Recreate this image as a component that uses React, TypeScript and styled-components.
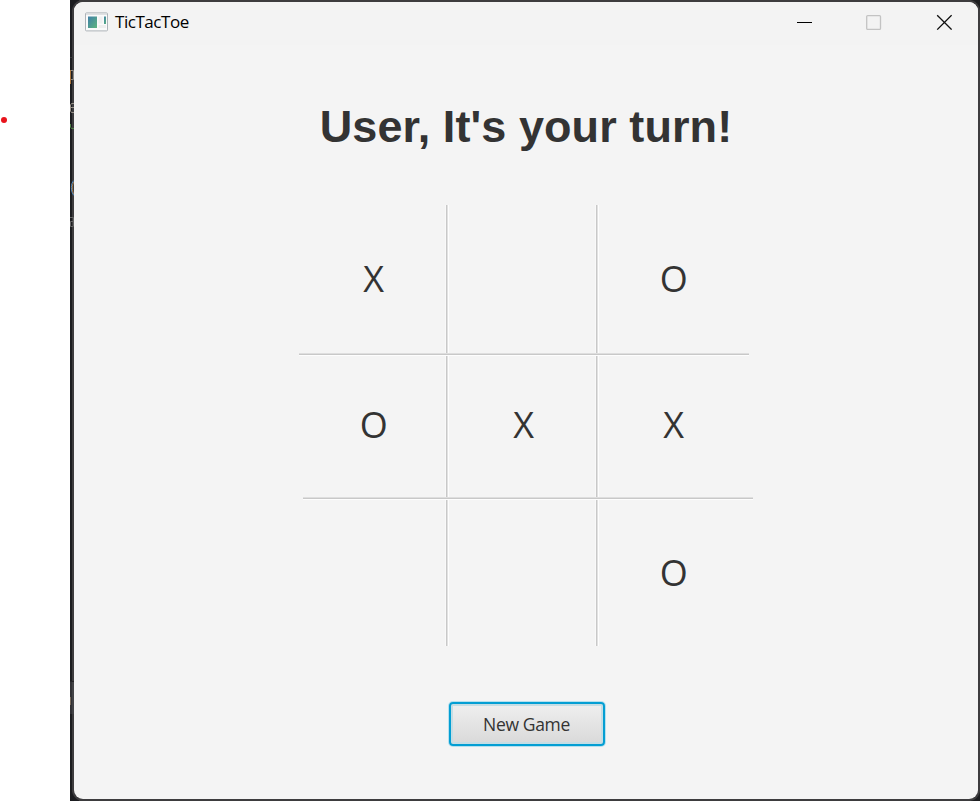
import React from 'react';
import styled, { createGlobalStyle } from 'styled-components';

const Global = createGlobalStyle`
  * { box-sizing: border-box; }
  body { margin: 0; background: #fff; overflow: hidden; }
`;

const Desktop = styled.div`
  display: flex;
  width: 980px;
  height: 801px;
  overflow: hidden;
  font-family: "Open Sans", "Noto Sans", sans-serif;
`;

const Margin = styled.div`
  flex: 0 0 70px;
  padding-top: 117px;
  background: #fff;
`;

const RedDot = styled.div`
  width: 6px;
  height: 6px;
  margin-left: 0.6px;
  border-radius: 50%;
  background: #e8141c;
`;

const Backdrop = styled.div`
  position: relative;
  flex: 1;
  padding: 2px 2px 2px 4px;
  background: linear-gradient(90deg, #1c1d20 2px, #3d3c3e 2px);
  overflow: hidden;
`;

const Corner = styled.div<{ $right?: boolean; $bottom?: boolean }>`
  position: absolute;
  ${(p) => (p.$right ? 'right: 0;' : 'left: 0;')}
  ${(p) => (p.$bottom ? 'bottom: 0;' : 'top: 0;')}
  width: 9px;
  height: 9px;
  background: #1c1d20;
`;

const EditorEdge = styled.svg`
  position: absolute;
  left: 0;
  top: 0;
`;

const Window = styled.main`
  position: relative;
  display: flex;
  flex-direction: column;
  align-items: center;
  width: 904px;
  height: 797px;
  border-radius: 9px;
  background: #f4f4f4;
  box-shadow: 0 0 0 2px #3d3c3e;
  overflow: hidden;
`;

const TitleBar = styled.header`
  display: flex;
  align-items: center;
  align-self: stretch;
  flex: 0 0 43px;
  padding: 0 11px 3px;
  background: #f3f3f3;
`;

const AppName = styled.span`
  flex: 1;
  margin-left: 6px;
  color: #000;
  font-size: 17px;
  line-height: 24px;
  letter-spacing: -0.45px;
`;

const Controls = styled.div`
  display: flex;
  gap: 46px;
  padding-right: 11px;
`;

const ControlButton = styled.button`
  display: flex;
  align-items: center;
  justify-content: center;
  width: 24px;
  height: 24px;
  padding: 0;
  border: 0;
  background: none;
`;

const Heading = styled.h1`
  margin: 56px 0 0;
  color: #333;
  font: bold 45px/52px "Liberation Sans", sans-serif;
  letter-spacing: 0.08px;
  white-space: nowrap;
`;

const Board = styled.div`
  display: grid;
  grid-template-columns: 146px 4px 146px 4px 150px;
  grid-template-rows: 148px 3px 141px 3px 146px;
  width: 450px;
  margin: 52px 4px 0 0;
`;

const Cell = styled.div<{ $col: number; $row: number; $drop: number }>`
  grid-column: ${(p) => p.$col * 2 + 1};
  grid-row: ${(p) => p.$row * 2 + 1};
  justify-self: start;
  width: 149.5px;
  padding-top: ${(p) => p.$drop}px;
  color: #333;
  font-size: 36px;
  line-height: 50px;
  text-align: center;
`;

const VLine = styled.div<{ $col: number }>`
  grid-column: ${(p) => p.$col};
  grid-row: 1 / -1;
  background: linear-gradient(90deg, #f9f9f9 1px, #c8c8c8 1px 2px, #e1e1e1 2px 3px, #fdfdfd 3px);
`;

const HLine = styled.div<{ $row: number; $shift?: number }>`
  grid-column: 1 / -1;
  grid-row: ${(p) => p.$row};
  margin-left: ${(p) => p.$shift ?? 0}px;
  margin-right: ${(p) => -(p.$shift ?? 0)}px;
  background: linear-gradient(#dedede 1px, #c8c8c8 1px 2px, #fdfdfd 2px);
`;

const NewGame = styled.button`
  width: 156px;
  height: 44px;
  margin: 56px 0 0 1px;
  padding: 0;
  border: 2px solid #039ed3;
  border-radius: 4px;
  background: linear-gradient(#efefef, #d9d9d9);
  box-shadow: 0 0 0 1px #b5e0ee, inset 0 0 0 2px #c5dde4;
  color: #333;
  font: 17.5px/24px "Open Sans", sans-serif;
  letter-spacing: -0.35px;
`;

const marks = [
  ['X', '', 'O'],
  ['O', 'X', 'X'],
  ['', '', 'O'],
];
const drops = [49, 44, 48];

function AppIcon() {
  return (
    <svg width="24" height="20" viewBox="0 0 24 20">
      <defs>
        <linearGradient id="pane" x1="0" y1="0" x2="1" y2="1">
          <stop offset="0" stopColor="#3f7fa8" />
          <stop offset="1" stopColor="#5db57e" />
        </linearGradient>
      </defs>
      <rect x="0.5" y="0.9" width="22" height="18" rx="1" fill="#fafafa" stroke="#adb3b8" />
      <path d="M1 2.2H22" stroke="#d2d5d8" />
      <rect x="3" y="4.5" width="9" height="11.5" fill="url(#pane)" />
      <rect x="13.5" y="4.5" width="4" height="7" fill="#f0f0f0" />
      <rect x="13.5" y="13" width="7.5" height="3" fill="#eee" />
      <rect x="19" y="4.5" width="2" height="7.5" fill="url(#pane)" />
    </svg>
  );
}

function EditorMarks() {
  return (
    <EditorEdge width="4" height="801" viewBox="0 0 4 801" fill="none">
      <path d="M0 57.5H4" stroke="#38383a" />
      <path d="M0.5 70V84" stroke="#a5713a" />
      <path d="M1 70.5H3.5V79.5H1" stroke="#8d8a85" />
      <path d="M4 103.5H1.5L0.5 105V111L1.5 112.5H4M0.5 107.5H4" stroke="#99928a" />
      <path d="M0.5 124V127L1.5 128.5H4" stroke="#4f8247" />
      <path d="M4 180.5C0.5 183 0.5 192 4 195.5" stroke="#4c8cca" />
      <path d="M4 182C1.7 185 1.7 191 4 194" stroke="#a98050" />
      <path d="M0 217.5H3.5V226M3.5 221.5H0.5V226.5H3.5" stroke="#656565" />
      <path d="M0 682H4V714H0Z" fill="#4b4b50" fillOpacity="0.45" />
      <path d="M0 681.5H4" stroke="#242427" />
      <path d="M0.5 697V705" stroke="#75685a" />
    </EditorEdge>
  );
}

export default function App() {
  return (
    <>
      <Global />
      <Desktop>
        <Margin>
          <RedDot />
        </Margin>
        <Backdrop>
          <Corner />
          <Corner $right />
          <Corner $bottom />
          <Corner $right $bottom />
          <Window>
            <TitleBar>
              <AppIcon />
              <AppName>TicTacToe</AppName>
              <Controls>
                <ControlButton aria-label="Minimize">
                  <svg width="16" height="16"><path d="M1 8.5H16" stroke="#000" /></svg>
                </ControlButton>
                <ControlButton aria-label="Maximize" disabled>
                  <svg width="16" height="16"><rect x="0.7" y="1.6" width="13.8" height="13.8" rx="1" fill="none" stroke="#c3c3c3" strokeWidth="1.3" /></svg>
                </ControlButton>
                <ControlButton aria-label="Close">
                  <svg width="16" height="16"><path d="M1.2 1.2L15.6 15.6M15.6 1.2L1.2 15.6" stroke="#111" strokeWidth="1.3" /></svg>
                </ControlButton>
              </Controls>
            </TitleBar>
            <Heading>User, It's your turn!</Heading>
            <Board>
              {marks.map((row, r) =>
                row.map((mark, c) => (
                  <Cell key={`${r}-${c}`} $row={r} $col={c} $drop={drops[r]}>{mark}</Cell>
                )),
              )}
              <VLine $col={2} />
              <VLine $col={4} />
              <HLine $row={2} />
              <HLine $row={4} $shift={4} />
            </Board>
            <NewGame>New Game</NewGame>
          </Window>
          <EditorMarks />
        </Backdrop>
      </Desktop>
    </>
  );
}
